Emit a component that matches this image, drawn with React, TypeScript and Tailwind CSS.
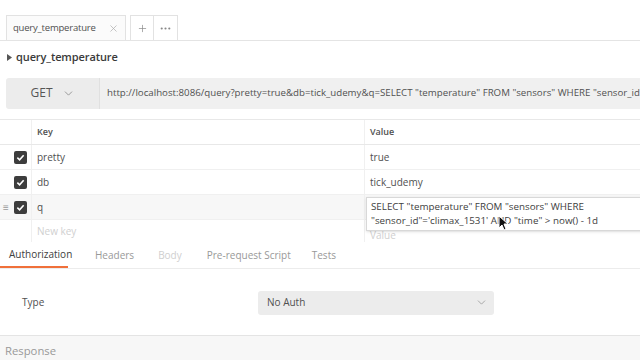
import { ChevronDown, X, Plus, MoreHorizontal } from 'lucide-react'

function Check() {
  return (
    <div className="w-[13px] h-[13px] rounded-[2px] bg-[#3d3d3d] flex items-center justify-center">
      <svg width="9" height="9" viewBox="0 0 10 10">
        <path d="M1.5 5.2 L4 7.5 L8.5 2.5" stroke="#fff" strokeWidth="1.8" fill="none" />
      </svg>
    </div>
  )
}

function ParamRow({ k, v, active }: { k: string; v: string; active?: boolean }) {
  return (
    <div className={`flex h-[25px] border-b border-[#f0f0f0] ${active ? 'bg-[#f7f7f7]' : ''}`}>
      <div className="w-[32px] flex items-center pl-[3px] gap-[3px] border-r border-[#f0f0f0]">
        <span className={`w-[8px] text-[10px] text-[#999] leading-none ${active ? '' : 'invisible'}`}>≡</span>
        <Check />
      </div>
      <div className="w-[333px] flex items-center pl-[5px] text-[10px] text-[#505050] border-r border-[#f0f0f0]">{k}</div>
      <div className="flex-1 flex items-center pl-[5px] text-[10px] text-[#505050]">{v}</div>
    </div>
  )
}

export default function App() {
  return (
    <div className="w-[640px] h-[360px] overflow-hidden bg-white flex flex-col" style={{ fontFamily: '"Open Sans", sans-serif' }}>
      {/* tab strip */}
      <div className="h-[41px] pt-[16px] pl-[6px] flex items-end border-b border-[#e4e4e4]">
        <div className="w-[120px] h-[25px] border border-b-0 border-[#e2e2e2] bg-[#fbfbfb] flex items-center pl-[6px] pr-[6px] text-[9.5px] tracking-[-0.2px] text-[#505050]">
          <span className="flex-1">query_temperature</span>
          <X size={11} strokeWidth={1.5} className="text-[#aaa]" />
        </div>
        <div className="ml-[4px] w-[24px] h-[25px] border border-b-0 border-[#e2e2e2] flex items-center justify-center text-[#888]">
          <Plus size={11} strokeWidth={1.5} />
        </div>
        <div className="w-[24px] h-[25px] border border-b-0 border-l-0 border-[#e2e2e2] flex items-center justify-center text-[#888]">
          <MoreHorizontal size={13} strokeWidth={2} />
        </div>
      </div>

      {/* title */}
      <div className="h-[33px] flex items-center pl-[7px] gap-[4px]">
        <svg width="5" height="7" viewBox="0 0 5 7"><path d="M0 0 L5 3.5 L0 7 Z" fill="#555" /></svg>
        <span className="text-[11px] tracking-[-0.1px] font-semibold text-[#3a3a3a]">query_temperature</span>
      </div>

      {/* url bar */}
      <div className="mt-[4px] h-[32px] flex pl-[6px]">
        <div className="w-[94px] bg-[#ececec] rounded-l-[3px] border-r border-[#e0e0e0] flex items-center justify-center gap-[9px] text-[12px] text-[#555]">
          <span>GET</span>
          <ChevronDown size={13} strokeWidth={1.5} className="text-[#888]" />
        </div>
        <div className="flex-1 bg-[#f0f0f0] flex items-center pl-[7px] text-[9.7px] text-[#505050] whitespace-nowrap overflow-hidden">
          http://localhost:8086/query?pretty=true&amp;db=tick_udemy&amp;q=SELECT "temperature" FROM "sensors" WHERE "sensor_id"='climax_1531' AND "time" &gt; now() - 1d
        </div>
      </div>

      {/* params table */}
      <div className="mt-[10px] border-t border-[#e8e8e8] relative">
        <div className="flex h-[25px] border-b border-[#e8e8e8]">
          <div className="w-[32px] border-r border-[#f0f0f0]" />
          <div className="w-[333px] flex items-center pl-[5px] text-[9px] font-semibold text-[#505050] border-r border-[#f0f0f0]">Key</div>
          <div className="flex-1 flex items-center pl-[5px] text-[9px] font-semibold text-[#505050]">Value</div>
        </div>
        <ParamRow k="pretty" v="true" />
        <ParamRow k="db" v="tick_udemy" />
        <ParamRow k="q" v="" active />
        <div className="flex h-[22px]">
          <div className="w-[32px] border-r border-[#f0f0f0]" />
          <div className="w-[333px] flex items-center pl-[5px] text-[10px] text-[#d0d0d0] border-r border-[#f0f0f0]">New key</div>
          <div className="flex-1 flex items-center pl-[5px] pt-[8px] text-[10px] text-[#d0d0d0]">Value</div>
        </div>
        <div className="absolute left-[366px] top-[77px] w-[280px] h-[34px] bg-white border border-[#d8d8d8] pl-[4px] pt-[2px] text-[9.8px] leading-[14px] text-[#404040] shadow-sm">
          <div className="whitespace-nowrap">SELECT "temperature" FROM "sensors" WHERE</div>
          <div className="whitespace-nowrap">"sensor_id"='climax_1531' AND "time" &gt; now() - 1d</div>
        </div>
        <svg className="absolute left-[498px] top-[95px]" width="10" height="16" viewBox="0 0 10 16">
          <path d="M1 1 L1 13 L4 10 L6 15 L8 14 L6 9 L10 9 Z" fill="#111" stroke="#fff" strokeWidth="1" />
        </svg>
      </div>

      {/* request tabs */}
      <div className="h-[27px] flex items-end border-b border-[#ececec] text-[10px]">
        <div className="w-[68px] h-full flex items-center pl-[9px] text-[#404040] border-b-[2px] border-[#f0703a] whitespace-nowrap">Authorization</div>
        <div className="ml-[27px] h-full flex items-center text-[#999]">Headers</div>
        <div className="ml-[24px] h-full flex items-center text-[#cfcfcf]">Body</div>
        <div className="ml-[25px] h-full flex items-center text-[#999]">Pre-request Script</div>
        <div className="ml-[21px] h-full flex items-center text-[#999]">Tests</div>
      </div>

      {/* auth type */}
      <div className="h-[68px] pt-[2px] flex items-center border-b border-[#e4e4e4]">
        <div className="w-[258px] pl-[22px] text-[10px] text-[#505050]">Type</div>
        <div className="w-[236px] h-[24px] rounded-[3px] bg-[#ececec] flex items-center pl-[9px] pr-[6px] text-[10px] text-[#505050]">
          <span className="flex-1">No Auth</span>
          <ChevronDown size={13} strokeWidth={1.5} className="text-[#999]" />
        </div>
      </div>

      {/* response */}
      <div className="flex-1 bg-[#f7f7f7] pl-[5px] pt-[7px] text-[11.3px] text-[#999]">Response</div>
    </div>
  )
}
